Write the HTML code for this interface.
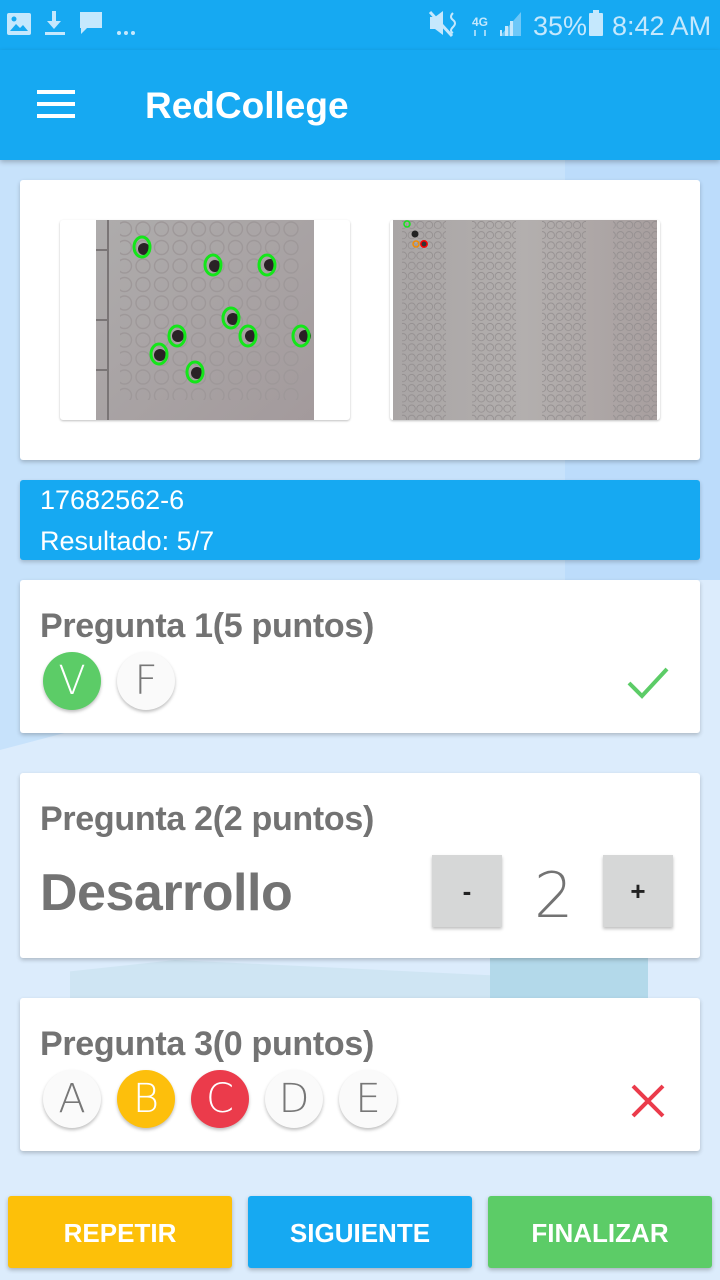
<!DOCTYPE html>
<html><head><meta charset="utf-8">
<style>
*{margin:0;padding:0;box-sizing:border-box}
body{width:720px;height:1280px;overflow:hidden;font-family:"Liberation Sans",sans-serif;background:#dcecfc;position:relative}
.bg1{position:absolute;left:0;top:160px;width:720px;height:600px;background:#c7e2fb;clip-path:polygon(0 0,100% 0,100% 400px,0 590px)}
.bg2{position:absolute;left:565px;top:160px;width:155px;height:420px;background:#bcdcfb}
.bg3{position:absolute;left:490px;top:958px;width:158px;height:40px;background:#b3d9ea}
.bg4{position:absolute;left:70px;top:960px;width:420px;height:38px;background:#cfe5f3;clip-path:polygon(0 30%,25% 0,100% 40%,100% 100%,0 100%)}
.status{position:absolute;top:0;left:0;width:720px;height:50px;background:#16a9f2}
.bar{position:absolute;top:50px;left:0;width:720px;height:110px;background:#16a9f2;box-shadow:0 2px 5px rgba(0,0,0,.25)}
.title{position:absolute;left:145px;top:85px;color:#fff;font-size:37px;font-weight:bold}
.ham{position:absolute;left:37px;width:38px;height:4px;background:#fff}
.card{position:absolute;left:20px;width:680px;background:#fff;border-radius:3px;box-shadow:0 2px 4px rgba(0,0,0,.22)}
.q{position:absolute;left:20px;color:#737373;font-size:34px;font-weight:bold;letter-spacing:-0.3px}
.c{position:absolute;width:58px;height:58px;border-radius:50%;background:#fafafa;box-shadow:0 2px 3px rgba(0,0,0,.25);color:#777;font-size:40px;text-align:center;line-height:58px;font-family:"DejaVu Sans","Liberation Sans",sans-serif;font-weight:200}
.btn{position:absolute;top:1196px;width:224px;height:72px;border-radius:3px;color:#fff;font-size:26px;font-weight:bold;text-align:center;line-height:74px;box-shadow:0 2px 4px rgba(0,0,0,.25)}
.sq{position:absolute;top:294px;width:70px;height:72px;background:#d6d7d7;box-shadow:0 2px 3px rgba(0,0,0,.25);text-align:center;line-height:72px;font-size:26px;font-weight:bold;color:#222}
</style></head><body>
<div class="bg1"></div><div class="bg2"></div><div class="bg3"></div><div class="bg4"></div>
<div class="status">
<svg width="720" height="50" style="position:absolute;left:0;top:0" fill="#c5e8fd">
<rect x="7" y="13" width="24" height="22" rx="2"/><path d="M10 31l6-7 4 4 3-3 5 6z" fill="#16a9f2"/><circle cx="14" cy="19" r="2.5" fill="#16a9f2"/>
<path d="M52 11h4v10h5l-7 8-7-8h5z"/><rect x="45" y="32" width="20" height="3"/>
<path d="M80 12h22v16h-15l-6 6v-6h-1z"/>
<circle cx="119" cy="33" r="2"/><circle cx="126" cy="33" r="2"/><circle cx="133" cy="33" r="2"/>
<path d="M430 17h5l8-6v24l-8-6h-5z"/><path d="M430 12l22 24" stroke="#c5e8fd" stroke-width="3"/>
<path d="M453 13q-4 4 0 7q4 3 0 7q-4 4 0 6" stroke="#c5e8fd" stroke-width="2" fill="none"/>
<text x="472" y="26" font-size="12" font-weight="bold" font-family="Liberation Sans">4G</text>
<path d="M475 30v6M485 30v6" stroke="#c5e8fd" stroke-width="1.5"/>
<path d="M500 36l21-24v24z" opacity=".5"/><rect x="500" y="30" width="2" height="6"/><rect x="505" y="26" width="3" height="10"/><rect x="510" y="21" width="3" height="15"/>
<text x="533" y="35" font-size="27" font-family="Liberation Sans">35%</text>
<rect x="589" y="13" width="14" height="23" rx="1"/><rect x="593" y="10" width="6" height="3"/>
<text x="612" y="35" font-size="27" font-family="Liberation Sans">8:42 AM</text>
</svg></div>
<div class="bar"></div>
<div class="ham" style="top:90px"></div><div class="ham" style="top:102px"></div><div class="ham" style="top:114px"></div>
<div class="title">RedCollege</div>

<div class="card" style="top:180px;height:280px">
<div style="position:absolute;left:40px;top:40px;width:290px;height:200px;background:#fff;border-radius:3px;box-shadow:0 1px 2px rgba(0,0,0,.25);overflow:hidden">
<svg width="290" height="200" style="position:absolute;left:0;top:0">
<defs><pattern id="b" width="18.5" height="18.5" patternUnits="userSpaceOnUse"><circle cx="9" cy="9" r="7" fill="none" stroke="#9e9899" stroke-width="1.4"/></pattern>
<linearGradient id="g" x1="0" y1="0" x2="1" y2="1"><stop offset="0" stop-color="#aeacac"/><stop offset="1" stop-color="#a39a9c"/></linearGradient></defs>
<rect x="36" y="0" width="218" height="200" fill="url(#g)"/>
<rect x="60" y="0" width="180" height="180" fill="url(#b)"/>
<g fill="none" stroke="#7a7576" stroke-width="2"><path d="M36 30h12v-30M36 30h12v70M36 100h12v50M36 150h12v50"/></g>
<g fill="#2a2226"><circle cx="84" cy="29" r="6"/><circle cx="155" cy="46" r="6"/><circle cx="210" cy="45" r="6"/><circle cx="173" cy="99" r="6"/><circle cx="118" cy="116" r="6"/><circle cx="191" cy="116" r="6"/><circle cx="245" cy="116" r="6"/><circle cx="100" cy="135" r="6"/><circle cx="137" cy="153" r="6"/></g>
<g fill="none" stroke="#14e61a" stroke-width="3"><ellipse cx="82" cy="27" rx="8" ry="10"/><ellipse cx="153" cy="45" rx="8" ry="10"/><ellipse cx="207" cy="45" rx="8" ry="10"/><ellipse cx="171" cy="98" rx="8" ry="10"/><ellipse cx="117" cy="116" rx="8" ry="10"/><ellipse cx="188" cy="116" rx="8" ry="10"/><ellipse cx="241" cy="116" rx="8" ry="10"/><ellipse cx="99" cy="134" rx="8" ry="10"/><ellipse cx="135" cy="152" rx="8" ry="10"/></g>
</svg></div>
<div style="position:absolute;left:370px;top:40px;width:270px;height:200px;background:#fff;border-radius:3px;box-shadow:0 1px 2px rgba(0,0,0,.25);overflow:hidden">
<svg width="270" height="200" style="position:absolute;left:0;top:0">
<defs><pattern id="s" width="8.7" height="10.2" patternUnits="userSpaceOnUse"><circle cx="4.3" cy="5" r="3.6" fill="none" stroke="#928d8e" stroke-width=".8"/></pattern>
<linearGradient id="g2" x1="0" y1="0" x2="1" y2="0"><stop offset="0" stop-color="#a9a5a5"/><stop offset=".5" stop-color="#b3afae"/><stop offset="1" stop-color="#a89f9f"/></linearGradient></defs>
<rect x="3" y="0" width="264" height="200" fill="url(#g2)"/>
<rect x="12" y="0" width="44" height="200" fill="url(#s)"/>
<rect x="82" y="0" width="44" height="200" fill="url(#s)"/>
<rect x="152" y="0" width="44" height="200" fill="url(#s)"/>
<rect x="223" y="0" width="44" height="200" fill="url(#s)"/>
<circle cx="17" cy="4" r="3" fill="none" stroke="#14e61a" stroke-width="1.5"/><circle cx="25" cy="14" r="3.5" fill="#222"/>
<circle cx="26" cy="24" r="3" fill="none" stroke="#f38b00" stroke-width="1.5"/><circle cx="34" cy="24" r="3.2" fill="#333" stroke="#f00" stroke-width="1.5"/>
</svg></div>
</div>

<div style="position:absolute;left:20px;top:480px;width:680px;height:80px;background:#16a9f2;border-radius:3px;box-shadow:0 2px 4px rgba(0,0,0,.2);color:#fff;font-size:27px">
<div style="position:absolute;left:20px;top:5px">17682562-6</div>
<div style="position:absolute;left:20px;top:46px">Resultado: 5/7</div></div>

<div class="card" style="top:580px;height:153px">
<div class="q" style="top:27px">Pregunta 1(5 puntos)</div>
<div class="c" style="left:23px;top:72px;background:#5ccc67;color:#fff">V</div>
<div class="c" style="left:97px;top:72px">F</div>
<svg style="position:absolute;left:606px;top:86px" width="44" height="34"><path d="M3 17l13 13L41 3" stroke="#5ccc67" stroke-width="4" fill="none"/></svg>
</div>

<div class="card" style="top:773px;height:185px">
<div class="q" style="top:27px">Pregunta 2(2 puntos)</div>
<div style="position:absolute;left:20px;top:90px;color:#737373;font-size:52px;font-weight:bold;letter-spacing:-0.5px">Desarrollo</div>
<div class="sq" style="left:412px;top:82px">-</div>
<div style="position:absolute;left:514px;top:86px;font-size:62px;color:#737373;font-family:'DejaVu Sans',sans-serif;font-weight:200">2</div>
<div class="sq" style="left:583px;top:82px">+</div>
</div>

<div class="card" style="top:998px;height:153px">
<div class="q" style="top:27px">Pregunta 3(0 puntos)</div>
<div class="c" style="left:23px;top:72px">A</div>
<div class="c" style="left:97px;top:72px;background:#fdbf0c;color:#fff">B</div>
<div class="c" style="left:171px;top:72px;background:#eb3b4b;color:#fff">C</div>
<div class="c" style="left:245px;top:72px">D</div>
<div class="c" style="left:319px;top:72px">E</div>
<svg style="position:absolute;left:610px;top:85px" width="36" height="36"><path d="M3 3l30 30M33 3L3 33" stroke="#eb3b4b" stroke-width="4"/></svg>
</div>

<div class="btn" style="left:8px;background:#fdc009">REPETIR</div>
<div class="btn" style="left:248px;background:#16a9f2">SIGUIENTE</div>
<div class="btn" style="left:488px;background:#5ccc67">FINALIZAR</div>
</body></html>
